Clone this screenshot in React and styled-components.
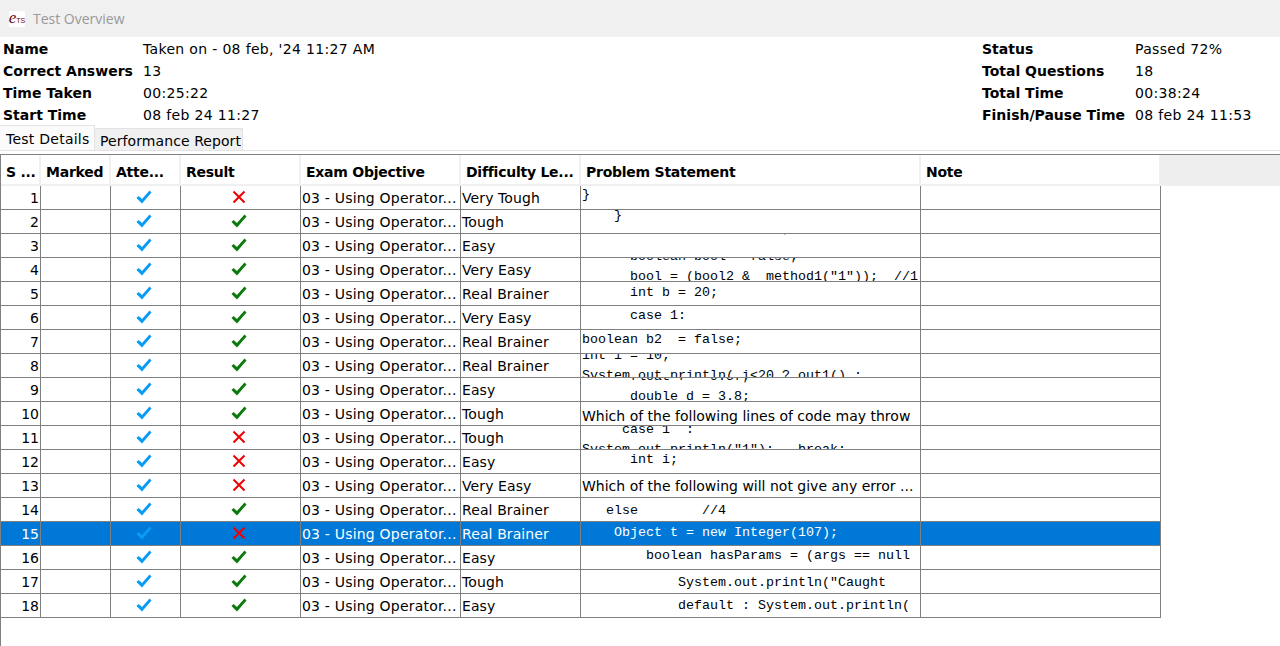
import styled, { createGlobalStyle } from "styled-components";

const GlobalStyle = createGlobalStyle`
  html, body {
    margin: 0;
    padding: 0;
    height: 100%;
    overflow: hidden;
    background: #ffffff;
  }
  * {
    box-sizing: border-box;
  }
`;

const sans = `"DejaVu Sans", Verdana, sans-serif`;

const summary = [
  ["Name", "Taken on - 08 feb, '24 11:27 AM", "Status", "Passed 72%"],
  ["Correct Answers", "13", "Total Questions", "18"],
  ["Time Taken", "00:25:22", "Total Time", "00:38:24"],
  ["Start Time", "08 feb 24 11:27", "Finish/Pause Time", "08 feb 24 11:53"],
];

const columns = ["S ...", "Marked", "Atte...", "Result", "Exam Objective", "Difficulty Le...", "Problem Statement", "Note"];

// problem text is a multi line snippet squeezed in a fixed row, so top decides what is seen
const rows = [
  { ok: false, level: "Very Tough", top: -1, code: ["}"] },
  { ok: true, level: "Tough", top: -4, code: ["    }"] },
  { ok: true, level: "Easy", top: -15, code: ["      boolean bool2 =true;"] },
  { ok: true, level: "Very Easy", top: -11, code: ["      boolean bool = false;", "      bool = (bool2 &  method1(\"1\"));  //1"] },
  { ok: true, level: "Real Brainer", top: 1, code: ["      int b = 20;"] },
  { ok: true, level: "Very Easy", top: 0, code: ["      case 1:"] },
  { ok: true, level: "Real Brainer", top: 0, code: ["boolean b2  = false;"] },
  { ok: true, level: "Real Brainer", top: -8, code: ["int i = 10;", "System.out.println( i<20 ? out1() :"] },
  { ok: true, level: "Easy", top: -11, code: ["      float f = 9.5f;", "      double d = 3.8;"] },
  { ok: true, level: "Tough", text: "Which of the following lines of code may throw", drop: 4 },
  { ok: false, level: "Tough", top: -6, code: ["     case 1  :", "System.out.println(\"1\");   break;"] },
  { ok: false, level: "Easy", top: 0, code: ["      int i;"] },
  { ok: false, level: "Very Easy", text: "Which of the following will not give any error ..." },
  { ok: true, level: "Real Brainer", top: 3, code: ["   else        //4"] },
  { ok: false, level: "Real Brainer", top: 1, code: ["    Object t = new Integer(107);"], selected: true },
  { ok: true, level: "Easy", top: 0, code: ["        boolean hasParams = (args == null"] },
  { ok: true, level: "Tough", top: 3, code: ["            System.out.println(\"Caught"] },
  { ok: true, level: "Easy", top: 2, code: ["            default : System.out.println("] },
];

function Tick({ color }) {
  return (
    <svg width="16" height="14" viewBox="0 0 16 14">
      <path d="M0.5 8 L2.5 6 L6 9 L13.5 0.5 L15.5 2.5 L6 13.5 Z" fill={color} />
    </svg>
  );
}

function Cross() {
  return (
    <svg width="14" height="14" viewBox="0 0 14 14">
      <path d="M1.5 1.5 L12.5 12.5 M12.5 1.5 L1.5 12.5" stroke="#f00000" strokeWidth="2" fill="none" />
    </svg>
  );
}

export default function App() {
  return (
    <Page>
      <GlobalStyle />
      <TitleBar>
        <Logo>
          <LogoE>e</LogoE>
          <LogoTs>TS</LogoTs>
        </Logo>
        <WindowTitle>Test Overview</WindowTitle>
      </TitleBar>

      <Info>
        {summary.map((row) => (
          <InfoRow key={row[0]}>
            <Label>{row[0]}</Label>
            <Value>{row[1]}</Value>
            <Label>{row[2]}</Label>
            <Value>{row[3]}</Value>
          </InfoRow>
        ))}
      </Info>

      <Tabs>
        <Tab $active>Test Details</Tab>
        <Tab>Performance Report</Tab>
      </Tabs>

      <TablePanel>
        <HeaderStrip>
          <Grid>
            {columns.map((c) => (
              <HeaderCell key={c}>{c}</HeaderCell>
            ))}
          </Grid>
        </HeaderStrip>
        {rows.map((row, i) => (
          <DataRow key={i} $selected={row.selected}>
            <NumberCell>{i + 1}</NumberCell>
            <Cell />
            <IconCell>
              <Tick color="#0a9bf5" />
            </IconCell>
            <IconCell>{row.ok ? <Tick color="#0a7a0a" /> : <Cross />}</IconCell>
            <ObjectiveCell>03 - Using Operator...</ObjectiveCell>
            <LevelCell>{row.level}</LevelCell>
            {row.text ? (
              <TextCell $drop={row.drop}>{row.text}</TextCell>
            ) : (
              <CodeCell>
                <Code $top={row.top}>{row.code.join("\n")}</Code>
              </CodeCell>
            )}
            <Cell />
          </DataRow>
        ))}
      </TablePanel>
    </Page>
  );
}

const Page = styled.div`
  width: 1280px;
  height: 646px;
  overflow: hidden;
  display: flex;
  flex-direction: column;
  font-family: ${sans};
  font-size: 14px;
  color: #000000;
`;

const TitleBar = styled.div`
  height: 37px;
  flex: none;
  background: #f0f0f0;
  display: flex;
  align-items: center;
  padding-left: 9px;
  gap: 8px;
`;

const Logo = styled.div`
  width: 16px;
  height: 16px;
  background: #ffffff;
  display: flex;
  align-items: center;
  justify-content: center;
  color: #6e0612;
  line-height: 1;
`;

const LogoE = styled.span`
  font-family: "Liberation Serif", serif;
  font-style: italic;
  font-size: 17px;
  margin-top: -3px;
`;

const LogoTs = styled.span`
  font-family: "Liberation Sans", sans-serif;
  font-size: 7px;
  margin-top: 3px;
`;

const WindowTitle = styled.span`
  font-family: "Open Sans", sans-serif;
  font-size: 14px;
  color: #999999;
`;

const Info = styled.div`
  flex: none;
  padding-top: 1px;
  padding-left: 3px;
`;

const InfoRow = styled.div`
  display: grid;
  grid-template-columns: 140px 839px 153px 1fr;
  height: 22px;
  align-items: center;
`;

const Label = styled.span`
  font-weight: 700;
  white-space: nowrap;
`;

const Value = styled.span`
  letter-spacing: 0.33px;
  white-space: nowrap;
`;

const Tabs = styled.div`
  flex: none;
  height: 25px;
  display: flex;
  align-items: flex-end;
  border-bottom: 1px solid #e3e3e3;
`;

const Tab = styled.div`
  height: ${(p) => (p.$active ? "25px" : "22px")};
  width: ${(p) => (p.$active ? "95px" : "148px")};
  padding: ${(p) => (p.$active ? "2px 0 0 6px" : "3px 0 0 5px")};
  display: flex;
  align-items: center;
  background: ${(p) => (p.$active ? "#fbfbfb" : "#f0f0f0")};
  border: 1px solid #e3e3e3;
  border-left: none;
  border-bottom: none;
  letter-spacing: ${(p) => (p.$active ? "0.25px" : "0.08px")};
  white-space: nowrap;
`;

const TablePanel = styled.div`
  flex: 1;
  margin-top: 3px;
  border-top: 1px solid #808080;
  border-left: 1px solid #808080;
`;

const HeaderStrip = styled.div`
  background: #eeeeee;
`;

const Grid = styled.div`
  display: grid;
  width: 1160px;
  grid-template-columns: 40px 70px 70px 120px 160px 120px 340px 240px;
`;

const HeaderCell = styled.div`
  height: 31px;
  padding: 5px 0 0 5px;
  display: flex;
  align-items: center;
  font-weight: 700;
  letter-spacing: -0.25px;
  white-space: nowrap;
  background: #ffffff;
  border-right: 2px solid #f0f0f0;
  border-bottom: 2px solid #f0f0f0;
`;

const DataRow = styled(Grid)`
  height: 24px;
  background: ${(p) => (p.$selected ? "#0078d7" : "#ffffff")};
  color: ${(p) => (p.$selected ? "#ffffff" : "#000000")};
`;

const Cell = styled.div`
  height: 24px;
  min-width: 0;
  overflow: hidden;
  border-right: 1px solid #808080;
  border-bottom: 1px solid #808080;
`;

const NumberCell = styled(Cell)`
  display: flex;
  align-items: center;
  justify-content: flex-end;
  padding-right: 1px;
`;

const IconCell = styled(Cell)`
  display: flex;
  align-items: center;
  justify-content: center;
  padding: 0 3px 1px 0;
`;

const TextCell = styled(Cell)`
  display: flex;
  align-items: center;
  padding: ${(p) => p.$drop || 0}px 0 0 1px;
  white-space: nowrap;
`;

const ObjectiveCell = styled(TextCell)`
  letter-spacing: 0.2px;
`;

const LevelCell = styled(TextCell)`
  letter-spacing: 0.1px;
`;

const CodeCell = styled(Cell)`
  padding-left: 1px;
`;

const Code = styled.pre`
  margin: ${(p) => p.$top}px 0 0;
  font-family: "Liberation Mono", "Courier New", monospace;
  font-size: 13.33px;
  line-height: 20px;
  white-space: pre;
`;
